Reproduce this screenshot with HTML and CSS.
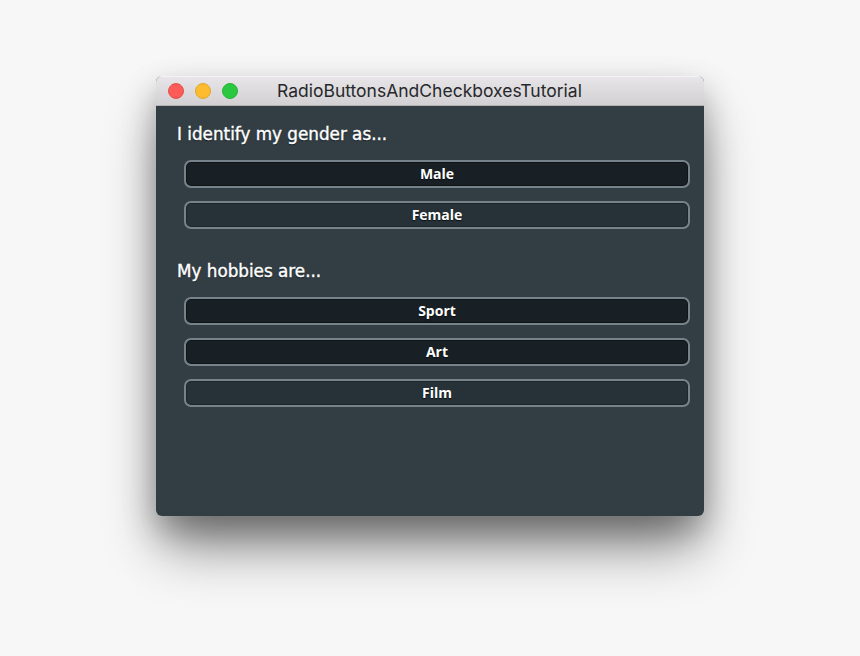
FILE: index.html
```html
<!DOCTYPE html>
<html lang="en">
<head>
    <meta charset="UTF-8">
    <meta name="viewport" content="width=device-width, initial-scale=1.0">
    <title>RadioButtonsAndCheckboxesTutorial</title>

    <link rel="stylesheet" href="styles.css">
</head>
<body>
    <div class="window">
        <div class="titlebar">
            <div class="lights">
                <span class="light light-close"></span>
                <span class="light light-min"></span>
                <span class="light light-max"></span>
            </div>
            <div class="title">RadioButtonsAndCheckboxesTutorial</div>
        </div>
        <div class="content">
            <section class="group">
                <h2>I identify my gender as...</h2>
                <div class="buttons">
                    <div class="btn on">Male</div>
                    <div class="btn">Female</div>
                </div>
            </section>
            <section class="group">
                <h2>My hobbies are...</h2>
                <div class="buttons">
                    <div class="btn on">Sport</div>
                    <div class="btn on">Art</div>
                    <div class="btn">Film</div>
                </div>
            </section>
        </div>
    </div>
</body>
</html>
```

FILE: styles.css
```css
* {
    box-sizing: border-box;
}
body {
    margin: 0;
    height: 656px;
    overflow: hidden;
    background-color: #f7f7f7;
    padding: 76px 156px 0;
}
.window {
    width: 548px;
    height: 440px;
    border-radius: 6px;
    overflow: hidden;
    box-shadow: 0 36px 52px -6px rgba(0, 0, 0, 0.46), 0 14px 32px rgba(0, 0, 0, 0.26);
    background-color: #323e44;
}
.titlebar {
    display: flex;
    align-items: center;
    height: 30px;
    padding-left: 12px;
    background: linear-gradient(#e8e6e8, #d2d0d2);
    border-bottom: 1px solid #b4b2b4;
    box-shadow: inset 0 1px 0 #f4f3f4;
}
.lights {
    display: flex;
    gap: 11px;
}
.light {
    width: 16px;
    height: 16px;
    border-radius: 50%;
}
.light-close {
    background-color: #fc5b57;
    border: 1px solid #e5504c;
}
.light-min {
    background-color: #fdbb2e;
    border: 1px solid #e3a52c;
}
.light-max {
    background-color: #2ac840;
    border: 1px solid #26b237;
}
.title {
    margin-left: 39px;
    font-family: "Inter", sans-serif;
    font-size: 17.5px;
    color: #27282c;
}
.content {
    padding: 17px 14px 0 21px;
}
.group {
    margin-bottom: 31px;
}
h2 {
    margin: 0 0 15px;
    font-family: "DejaVu Sans", sans-serif;
    font-size: 16.8px;
    line-height: 22px;
    font-weight: normal;
    color: #fff;
    -webkit-text-stroke: 0.4px #fff;
    text-shadow: 0 1px 1px #11161a;
}
.buttons {
    display: flex;
    flex-direction: column;
    gap: 13px;
    margin-left: 7px;
}
.btn {
    height: 28px;
    border: 2px solid #74808a;
    border-color: #76838a;
    border-radius: 7px;
    background-color: #263138;
    background-clip: padding-box;
    box-shadow: inset 0 0 0 1px #1d262b;
    font-family: "Open Sans", sans-serif;
    font-size: 14px;
    font-weight: 700;
    line-height: 24px;
    text-align: center;
    color: #fff;
    text-shadow: 0 1px 1px #0b0f12;
}
.btn.on {
    background-color: #192025;
    box-shadow: inset 0 0 0 1px #0f1417;
}
```
